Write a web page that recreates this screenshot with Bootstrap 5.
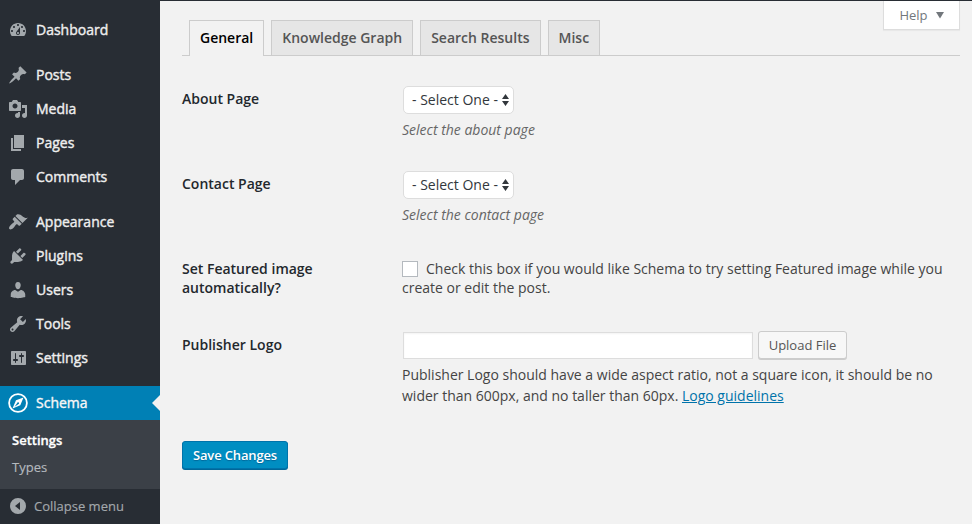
<!DOCTYPE html>
<html lang="en">
<head>
<meta charset="utf-8">
<meta name="viewport" content="width=device-width, initial-scale=1">
<title>Schema Settings</title>
<link rel="stylesheet" href="https://cdn.jsdelivr.net/npm/bootstrap@5.3.0/dist/css/bootstrap.min.css">
<style>
body{font-family:"Open Sans",sans-serif;font-size:14px;line-height:19px;color:#444;background:#f2f2f2;height:524px;overflow:hidden}
.shell{height:524px;border-top:1px solid #282d34}
.side{width:160px;background:#282d34;padding-top:12px}
.side svg{width:20px;height:20px;fill:#a3a8ac;flex:none;margin-top:2px}
.side .nav-link{height:34px;padding:0 8px 2px;gap:8px;color:#eee;-webkit-text-stroke:.4px #eee}
.gap-top{margin-top:11px}
.side .nav-link.current{background:#0080b5;color:#fff;position:relative}
.side .nav-link.current svg{fill:#fff}
.current::after{content:"";position:absolute;right:0;top:9px;border:8px solid transparent;border-right-color:#f2f2f2;border-left:0}
.submenu{background:#3b4047;height:69px;padding:7px 12px;font-size:13px}
.submenu a{display:block;line-height:27px;color:#b4b9be;text-decoration:none;-webkit-text-stroke:.15px}
.submenu a.on{color:#fff;font-weight:600;-webkit-text-stroke:.3px}
.side .collapse-link{color:#a3a8ac;gap:6px;font-size:13px;padding-bottom:0;-webkit-text-stroke:.15px}
.side .collapse-link svg{margin-top:0}
.main{padding:0 12px 0 22px}
.help{width:77px;height:29px;font-size:13px;color:#72777c;background:#fff;border:1px solid #ddd;border-top:0;box-shadow:0 1px 1px rgba(0,0,0,.04)}
.tabs{margin-top:-10px;padding:0 7px;gap:7px;border-bottom:1px solid #ccc;height:36px}
.tabs .nav-link{height:35px;padding:0 10px;border:1px solid #ccc;border-bottom:0;border-radius:0;background:#e6e6e6;color:#555;font-weight:600;line-height:34px}
.tabs .nav-link.active{height:36px;background:#f2f2f2;color:#000}
.lbl{width:220px;flex:none;padding:3px 60px 0 0;font-weight:600;color:#23282d}
.r1{margin-top:30px;height:85px}
.r3{height:76px}
.r4{height:109px}
.hint{font-style:italic;color:#666;margin-top:6px}
.sel{width:111px;height:28px;margin:0 0 0 1px}
.sel select{width:111px;height:28px;padding:0 0 0 8px;font-size:14px;line-height:26px;color:#32373c;background:#fff;border:1px solid #ddd;border-radius:5px;appearance:none}
.sel svg{position:absolute;right:5px;top:8px}
.check-cell{padding-top:3px}
.form-check-input.box{width:16px;height:16px;border:1px solid #b4b9be;border-radius:0;margin:0 8px 0 0;vertical-align:-3px;background:#fff}
.logo-row{margin-top:-1px}
.form-control.logo{width:350px;height:27px;margin-left:1px;border:1px solid #ddd;border-radius:0;box-shadow:inset 0 1px 2px rgba(0,0,0,.05)}
.btn.upload{width:89px;height:28px;margin-left:5px;padding:0;font-size:13px;line-height:26px;color:#555;background:#f7f7f7;border:1px solid #ccc;border-radius:3px;box-shadow:0 1px 0 #ccc}
.btn.save{width:106px;height:28px;padding:0;font-size:13px;line-height:26px;font-weight:600;color:#fff;background:#008ec2;border:1px solid #0073aa;border-radius:3px;box-shadow:0 1px 0 #006799;text-shadow:0 1px 1px #006799;letter-spacing:-.15px}
.about-logo{line-height:21px;margin-top:5px}
.about-logo a{color:#0073aa}
</style>
<script src="https://cdn.jsdelivr.net/npm/bootstrap@5.3.0/dist/js/bootstrap.bundle.min.js"></script>
</head>
<body>
<div class="shell d-flex">
<nav class="side nav flex-column flex-nowrap flex-shrink-0">
<a class="nav-link d-flex align-items-center" href="#"><svg viewBox="0 0 20 20"><path d="M3.76 16h12.48c1.1-1.37 1.76-3.11 1.76-5 0-4.42-3.58-8-8-8s-8 3.58-8 8c0 1.89.66 3.63 1.76 5zM10 4c.55 0 1 .45 1 1s-.45 1-1 1-1-.45-1-1 .45-1 1-1zM6 6c.55 0 1 .45 1 1s-.45 1-1 1-1-.45-1-1 .45-1 1-1zm8 0c.55 0 1 .45 1 1s-.45 1-1 1-1-.45-1-1 .45-1 1-1zm-5.37 5.55L12 7v6c0 1.1-.9 2-2 2s-2-.9-2-2c0-.57.24-1.08.63-1.45zM4 10c.55 0 1 .45 1 1s-.45 1-1 1-1-.45-1-1 .45-1 1-1zm12 0c.55 0 1 .45 1 1s-.45 1-1 1-1-.45-1-1 .45-1 1-1zm-5 3c0-.55-.45-1-1-1s-1 .45-1 1 .45 1 1 1 1-.45 1-1z" fill-rule="evenodd"/></svg>Dashboard</a>
<a class="nav-link d-flex align-items-center gap-top" href="#"><svg viewBox="0 0 20 20"><path d="M10.44 3.02l1.82-1.82 6.36 6.35-1.83 1.82c-1.05-.68-2.48-.57-3.41.36l-.75.75c-.92.93-1.04 2.35-.35 3.41l-1.83 1.82-2.41-2.41-2.8 2.79c-.42.42-3.38 2.71-3.8 2.29s1.86-3.39 2.28-3.81l2.79-2.79L4.1 9.36l1.83-1.82c1.05.69 2.48.57 3.4-.36l.75-.75c.93-.92 1.05-2.35.36-3.41z"/></svg>Posts</a>
<a class="nav-link d-flex align-items-center" href="#"><svg viewBox="0 0 20 20"><path fill-rule="evenodd" d="M13 11V4c0-.55-.45-1-1-1h-1.67L9 1H5L3.67 3H2c-.55 0-1 .45-1 1v7c0 .55.45 1 1 1h10c.55 0 1-.45 1-1zM7 4.5c1.38 0 2.5 1.12 2.5 2.5S8.38 9.5 7 9.5 4.5 8.38 4.5 7 5.62 4.5 7 4.5zM14 6h5v10.5c0 1.38-1.12 2.5-2.5 2.5S14 17.88 14 16.5s1.12-2.5 2.5-2.5c.17 0 .34.02.5.05V9h-3V6zm-4 8.05V13h2v3.5c0 1.38-1.12 2.5-2.5 2.5S7 17.88 7 16.5 8.12 14 9.5 14c.17 0 .34.02.5.05z"/></svg>Media</a>
<a class="nav-link d-flex align-items-center" href="#"><svg viewBox="0 0 20 20"><path d="M6 15V2h10v13H6zm-1 1h8v2H3V5h2v11z"/></svg>Pages</a>
<a class="nav-link d-flex align-items-center" href="#"><svg viewBox="0 0 20 20"><path d="M5 2h9c1.1 0 2 .9 2 2v7c0 1.1-.9 2-2 2h-2l-5 5v-5H5c-1.1 0-2-.9-2-2V4c0-1.1.9-2 2-2z"/></svg>Comments</a>
<a class="nav-link d-flex align-items-center gap-top" href="#"><svg viewBox="0 0 20 20"><path d="M14.48 11.06L7.41 3.99l1.5-1.5c.5-.56 2.3-.47 3.51.32 1.21.8 1.43 1.28 2.91 2.1 1.18.64 2.45 1.26 4.45.85zm-.71.71L6.7 4.7 4.93 6.47c-.39.39-.39 1.02 0 1.41l1.06 1.06c.39.39.39 1.03 0 1.42-.6.6-1.43 1.11-2.21 1.69-.35.26-.7.53-1.01.84C1.43 14.23.4 16.08 1.4 17.07c.99 1 2.84-.03 4.18-1.36.31-.31.58-.66.85-1.02.57-.78 1.08-1.61 1.69-2.21.39-.39 1.02-.39 1.41 0l1.06 1.06c.39.39 1.02.39 1.41 0z"/></svg>Appearance</a>
<a class="nav-link d-flex align-items-center" href="#"><svg viewBox="0 0 20 20"><path d="M13.11 4.36L9.87 7.6 8 5.73l3.24-3.24c.35-.34 1.05-.2 1.56.32.52.51.66 1.21.31 1.55zm-8 1.77l.91-1.12 9.01 9.01-1.19.84c-.71.71-2.63 1.16-3.82 1.16H6.14L4.9 17.26c-.59.59-1.54.59-2.12 0-.59-.58-.59-1.53 0-2.12l1.24-1.24v-3.88c0-1.13.4-3.19 1.09-3.89zm7.26 3.97l3.24-3.24c.34-.35 1.04-.21 1.55.31.52.51.66 1.21.31 1.55l-3.24 3.25z"/></svg>Plugins</a>
<a class="nav-link d-flex align-items-center" href="#"><svg viewBox="0 0 20 20"><path d="M10 9.25c-2.27 0-2.73-3.44-2.73-3.44C7 4.02 7.82 2 9.97 2c2.16 0 2.98 2.02 2.71 3.81 0 0-.41 3.44-2.68 3.44zm0 2.57L12.72 10c2.39 0 4.52 2.33 4.52 4.53v2.49s-3.65 1.13-7.24 1.13c-3.65 0-7.24-1.13-7.24-1.13v-2.49c0-2.25 1.94-4.48 4.47-4.48z"/></svg>Users</a>
<a class="nav-link d-flex align-items-center" href="#"><svg viewBox="0 0 20 20"><path fill-rule="evenodd" d="M16.68 9.77c-1.34 1.34-3.3 1.67-4.95.99l-5.41 6.52c-.99.99-2.59.99-3.58 0s-.99-2.59 0-3.57l6.52-5.42c-.68-1.65-.35-3.61.99-4.95 1.28-1.28 3.12-1.62 4.72-1.06l-2.89 2.89 2.82 2.82 2.86-2.87c.53 1.58.18 3.39-1.08 4.65zM3.81 16.21c.4.39 1.04.39 1.43 0 .4-.4.4-1.04 0-1.43-.39-.4-1.03-.4-1.43 0-.39.39-.39 1.03 0 1.43z"/></svg>Tools</a>
<a class="nav-link d-flex align-items-center" href="#"><svg viewBox="0 0 20 20"><path fill-rule="evenodd" d="M18 16V4c0-.55-.45-1-1-1H4c-.55 0-1 .45-1 1v12c0 .55.45 1 1 1h13c.55 0 1-.45 1-1zM8 11h1c.55 0 1 .45 1 1s-.45 1-1 1H8v1.500c0 .28-.22.5-.5.5s-.5-.22-.5-.5V13H6c-.55 0-1-.45-1-1s.45-1 1-1h1V5.500c0-.28.22-.5.5-.5s.5.22.5.5V11zm5-2h-1c-.55 0-1-.45-1-1s.45-1 1-1h1V5.500c0-.28.22-.5.5-.5s.5.22.5.5V7h1c.55 0 1 .45 1 1s-.45 1-1 1h-1v5.500c0 .28-.22.5-.5.5s-.5-.22-.5-.5V9z"/></svg>Settings</a>
<a class="nav-link current d-flex align-items-center gap-top" href="#"><svg viewBox="0 0 20 20"><path fill-rule="evenodd" d="M10 .2a9.800 9.800 0 1 0 0 19.600A9.800 9.800 0 0 0 10 .2zm0 1.800a8 8 0 1 1 0 16 8 8 0 0 1 0-16zM15.500 4.500L8 7.300 4.500 15.500 12.300 12.300zM9.700 9.200a1.100 1.100 0 0 1 1.300 1.500L6.600 13.700z"/></svg>Schema</a>
<div class="submenu"><a class="on" href="#">Settings</a><a href="#">Types</a></div>
<a class="nav-link collapse-link d-flex align-items-center" href="#"><svg viewBox="0 0 20 20"><path fill-rule="evenodd" d="M10 2a8 8 0 1 0 0 16 8 8 0 0 0 0-16zm2 4v8l-5-4z"/></svg>Collapse menu</a>
</nav>
<main class="main flex-grow-1">
<div class="d-flex justify-content-end"><div class="help d-flex align-items-center justify-content-center gap-2">Help <svg width="8" height="7" viewBox="0 0 8 7"><path d="M0 0h8L4 6.500z" fill="#72777c"/></svg></div></div>
<nav class="nav tabs flex-nowrap"><a class="nav-link active" href="#">General</a><a class="nav-link" href="#">Knowledge Graph</a><a class="nav-link" href="#">Search Results</a><a class="nav-link" href="#">Misc</a></nav>
<form>
<div class="d-flex r1"><div class="lbl">About Page</div><div><div class="sel position-relative"><select aria-label="About Page"><option>- Select One -</option></select><svg width="7" height="12" viewBox="0 0 7 12"><path d="M3.500 0L7 5H0zM3.500 12L7 7H0z" fill="#32373c"/></svg></div><div class="hint">Select the about page</div></div></div>
<div class="d-flex r1 mt-0"><div class="lbl">Contact Page</div><div><div class="sel position-relative"><select aria-label="Contact Page"><option>- Select One -</option></select><svg width="7" height="12" viewBox="0 0 7 12"><path d="M3.500 0L7 5H0zM3.500 12L7 7H0z" fill="#32373c"/></svg></div><div class="hint">Select the contact page</div></div></div>
<div class="d-flex r3"><div class="lbl">Set Featured image automatically?</div><div class="check-cell"><input type="checkbox" class="form-check-input box" id="feat"><label class="d-inline" for="feat">Check this box if you would like Schema to try setting Featured image while you create or edit the post.</label></div></div>
<div class="d-flex r4"><div class="lbl">Publisher Logo</div><div class="logo-row"><div class="d-flex align-items-center"><input class="form-control logo" type="text" aria-label="Publisher Logo"><button type="button" class="btn upload">Upload File</button></div><div class="about-logo">Publisher Logo should have a wide aspect ratio, not a square icon, it should be no<br>wider than 600px, and no taller than 60px. <a href="#">Logo guidelines</a></div></div></div>
<button type="button" class="btn save">Save Changes</button>
</form>
</main>
</div>
</body>
</html>
